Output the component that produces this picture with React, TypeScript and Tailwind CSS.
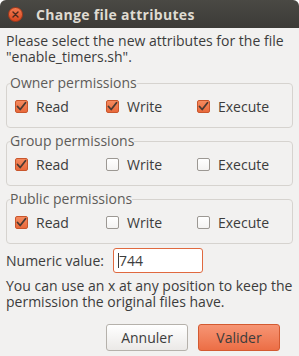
import { useState } from 'react'

type Perm = { read: boolean; write: boolean; execute: boolean }

function Check({ checked, label }: { checked: boolean; label: string }) {
  return (
    <label className="flex items-center gap-[8px] h-[18px]">
      {checked ? (
        <span className="w-[13px] h-[13px] rounded-[2px] border border-[#c9562c] bg-gradient-to-b from-[#f58a5e] to-[#e9693b] flex items-center justify-center">
          <svg width="11" height="11" viewBox="0 0 11 11">
            <path d="M1.5 5.5 L4.2 8.5 L9.5 1.8" fill="none" stroke="#4a3a33" strokeWidth="1.8" strokeLinecap="round" strokeLinejoin="round" />
          </svg>
        </span>
      ) : (
        <span className="w-[13px] h-[13px] rounded-[2px] border border-[#9c9893] bg-gradient-to-b from-[#ffffff] to-[#f4f3f2]" />
      )}
      <span>{label}</span>
    </label>
  )
}

function PermGroup({ title, perm }: { title: string; perm: Perm }) {
  return (
    <fieldset className="border border-[#d6d3cf] rounded-[4px] px-0 pb-[12px] mt-[5px] first:mt-0">
      <legend className="ml-[3px] text-[#5e5c59] leading-[16px]">{title}</legend>
      <div className="grid grid-cols-[91px_91px_91px] pl-[8px] pt-[6px]">
        <Check checked={perm.read} label="Read" />
        <Check checked={perm.write} label="Write" />
        <Check checked={perm.execute} label="Execute" />
      </div>
    </fieldset>
  )
}

export default function App() {
  const [value] = useState('744')

  return (
    <div className="w-[299px] h-[356px] bg-white" style={{ fontFamily: '"Open Sans", sans-serif' }}>
      <div className="h-full rounded-t-[6px] overflow-hidden bg-[#f2f1f0] text-[14px] text-[#3c3c3c] flex flex-col">
        <div className="h-[28px] shrink-0 bg-gradient-to-b from-[#4a4944] to-[#3c3b37] flex items-center pl-[8px] gap-[13px]">
          <span className="w-[15px] h-[15px] rounded-full bg-gradient-to-b from-[#f27a4f] to-[#d8461d] border border-[#a8391a] flex items-center justify-center">
            <svg width="7" height="7" viewBox="0 0 7 7">
              <path d="M1 1 L6 6 M6 1 L1 6" stroke="#4a2a1e" strokeWidth="1.4" strokeLinecap="round" />
            </svg>
          </span>
          <span className="font-bold text-[14px] text-[#dfdbd2] tracking-[0.3px]">Change file attributes</span>
        </div>

        <div className="px-[6px] pt-[5px] leading-[16px]">
          <p>Please select the new attributes for the file "enable_timers.sh".</p>
        </div>

        <div className="px-[6px] mt-[10px] flex flex-col">
          <PermGroup title="Owner permissions" perm={{ read: true, write: true, execute: true }} />
          <PermGroup title="Group permissions" perm={{ read: true, write: false, execute: false }} />
          <PermGroup title="Public permissions" perm={{ read: true, write: false, execute: false }} />
        </div>

        <div className="px-[6px] mt-[4px] flex items-center gap-[9px]">
          <span>Numeric value:</span>
          <div className="w-[90px] h-[25px] rounded-[3px] border border-[#e0693f] bg-white flex items-center pl-[4px]">
            <span className="w-px h-[15px] bg-[#3c3c3c]" />
            <span>{value}</span>
          </div>
        </div>

        <p className="px-[6px] mt-[5px] leading-[16px]">
          You can use an x at any position to keep the permission the original files have.
        </p>

        <div className="flex justify-end gap-[10px] pr-[19px] mt-[14px]">
          <button className="w-[82px] h-[27px] rounded-[3px] border border-[#b5b1ab] bg-gradient-to-b from-[#ffffff] to-[#ebe9e7] text-[#3c3c3c]">
            Annuler
          </button>
          <button className="w-[82px] h-[27px] rounded-[3px] border border-[#d35a31] bg-gradient-to-b from-[#f69574] to-[#ec6e45] text-[#3c3c3c]">
            Valider
          </button>
        </div>
      </div>
    </div>
  )
}
